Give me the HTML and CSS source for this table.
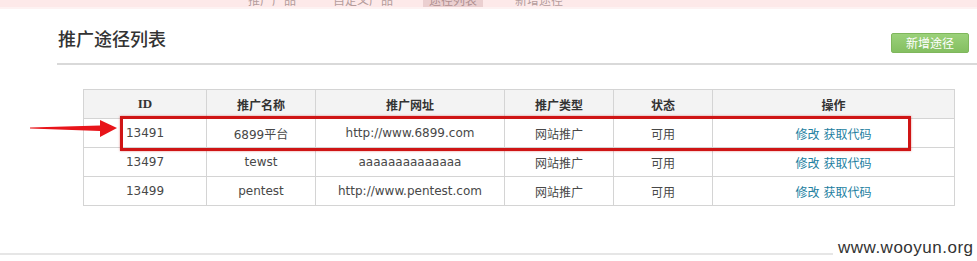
FILE: index.html
```html
<!DOCTYPE html>
<html lang="zh-CN">
<head>
<meta charset="utf-8">
<title>推广途径列表</title>
<link rel="stylesheet" href="styles.css">
</head>
<body>
<header class="topnav">
  <nav class="topnav-inner">
    <a class="nav-item nav-1">推广产品</a>
    <a class="nav-item nav-2">自定义产品</a>
    <a class="nav-item nav-3 active">途径列表</a>
    <a class="nav-item nav-4">新增途径</a>
  </nav>
</header>
<main class="content">
  <div class="title-row">
    <h1 class="title">推广途径列表</h1>
    <a class="btn-add">新增途径</a>
  </div>
  <div class="divider"></div>
  <div class="table-wrap">
    <table class="list">
      <colgroup>
        <col class="c1"><col class="c2"><col class="c3"><col class="c4"><col class="c5"><col class="c6">
      </colgroup>
      <thead>
        <tr><th class="id-head">ID</th><th>推广名称</th><th>推广网址</th><th>推广类型</th><th>状态</th><th>操作</th></tr>
      </thead>
      <tbody>
        <tr><td>13491</td><td>6899平台</td><td>http://www.6899.com</td><td>网站推广</td><td>可用</td><td><a class="op">修改</a> <a class="op">获取代码</a></td></tr>
        <tr><td>13497</td><td>tewst</td><td>aaaaaaaaaaaaaa</td><td>网站推广</td><td>可用</td><td><a class="op">修改</a> <a class="op">获取代码</a></td></tr>
        <tr><td>13499</td><td>pentest</td><td>http://www.pentest.com</td><td>网站推广</td><td>可用</td><td><a class="op">修改</a> <a class="op">获取代码</a></td></tr>
      </tbody>
    </table>
    <div class="mark-box"></div>
    <svg class="mark-arrow" width="90" height="24" viewBox="0 0 90 24">
      <path d="M0 10.5 L70 8.5 L70 3 L87 11 L70 20 L70 14 L0 11.5 Z" fill="#e8141a"/>
    </svg>
  </div>
</main>
<footer class="footer">
  <div class="footer-line"></div>
  <span class="watermark">www.wooyun.org</span>
</footer>
</body>
</html>
```

FILE: styles.css
```css
html, body {
  margin: 0;
  padding: 0;
  background: #fff;
}
body {
  width: 977px;
  height: 261px;
  overflow: hidden;
  font-family: "DejaVu Sans", "Noto Sans CJK SC", sans-serif;
  font-size: 12px;
  color: #333;
}
.topnav {
  height: 7px;
  background: #fde9e9;
  border-bottom: 2px solid #fdf2f2;
  overflow: hidden;
}
.topnav-inner {
  display: flex;
  margin-top: -7px;
  padding-left: 246px;
  font-family: "Noto Sans CJK SC", sans-serif;
  font-size: 12px;
  line-height: 14px;
  color: #b49c9c;
}
.nav-item {
  display: block;
  padding: 0 2px;
}
.nav-2 { margin-left: 33px; }
.nav-3 { margin-left: 28px; padding: 0 6px; }
.nav-4 { margin-left: 30px; }
.nav-item.active {
  background: #ebcfd0;
  color: #b08f90;
}
.content {
  padding-left: 57px;
}
.title-row {
  display: flex;
  justify-content: space-between;
  align-items: flex-end;
  height: 44px;
  padding-right: 8px;
}
.title {
  margin: 17px 0 0 1px;
  font-family: "Noto Sans CJK SC", sans-serif;
  font-size: 18px;
  font-weight: 500;
  line-height: 24px;
  color: #333;
  align-self: flex-start;
}
.btn-add {
  display: block;
  width: 76px;
  height: 18px;
  border: 1px solid #7fb75c;
  border-radius: 2px;
  background: linear-gradient(#9bd17a, #84bf61);
  color: #fff;
  font-family: "Noto Sans CJK SC", sans-serif;
  font-size: 12px;
  line-height: 18px;
  text-align: center;
}
.divider {
  height: 2px;
  margin-top: 10px;
  background: #d9d9d9;
}
.table-wrap {
  position: relative;
  margin: 24px 0 0 26px;
  width: 871px;
}
.list {
  border-collapse: collapse;
  table-layout: fixed;
  width: 871px;
}
.c1 { width: 123px; }
.c2 { width: 109px; }
.c3 { width: 189px; }
.c4 { width: 109px; }
.c5 { width: 99px; }
.c6 { width: 242px; }
.list th, .list td {
  border: 1px solid #d4d4d4;
  height: 28px;
  padding: 0;
  text-align: center;
  vertical-align: middle;
}
.list th {
  background: #f3f3f3;
  font-family: "Noto Sans CJK SC", sans-serif;
  font-weight: bold;
  font-size: 12px;
  color: #333;
}
.list th.id-head {
  font-family: "Liberation Serif", serif;
  font-size: 13px;
}
.list td {
  font-size: 12px;
  color: #484848;
}
.op {
  color: #22809f;
  font-family: "Noto Sans CJK SC", sans-serif;
  font-size: 12px;
}
.mark-box {
  position: absolute;
  left: 37px;
  top: 27px;
  width: 785px;
  height: 29px;
  border: 3px solid #cf1515;
  box-shadow: 0 0 2px rgba(200, 20, 20, 0.5);
}
.mark-arrow {
  position: absolute;
  left: -53px;
  top: 28px;
}
.footer {
  display: flex;
  align-items: flex-end;
  height: 19px;
  margin-top: 32px;
}
.footer-line {
  width: 833px;
  height: 2px;
  margin-bottom: 2px;
  background: #e6e6e6;
}
.watermark {
  margin-left: 5px;
  font-family: "Liberation Sans", sans-serif;
  font-size: 17px;
  line-height: 19px;
  letter-spacing: 0.5px;
  color: #333;
}
```
